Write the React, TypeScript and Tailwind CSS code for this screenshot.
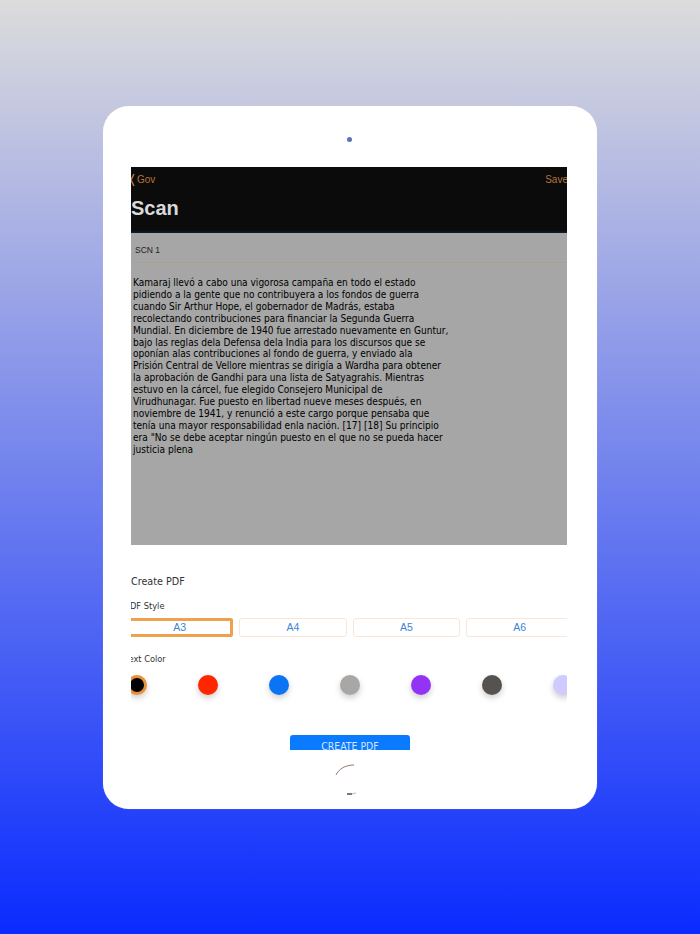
import React from "react";

const body = [
  "Kamaraj llevó a cabo una vigorosa campaña en todo el estado",
  "pidiendo a la gente que no contribuyera a los fondos de guerra",
  "cuando Sir Arthur Hope, el gobernador de Madrás, estaba",
  "recolectando contribuciones para financiar la Segunda Guerra",
  "Mundial. En diciembre de 1940 fue arrestado nuevamente en Guntur,",
  "bajo las reglas dela Defensa dela India para los discursos que se",
  "oponían alas contribuciones al fondo de guerra, y enviado ala",
  "Prisión Central de Vellore mientras se dirigía a Wardha para obtener",
  "la aprobación de Gandhi para una lista de Satyagrahis. Mientras",
  "estuvo en la cárcel, fue elegido Consejero Municipal de",
  "Virudhunagar. Fue puesto en libertad nueve meses después, en",
  "noviembre de 1941, y renunció a este cargo porque pensaba que",
  "tenía una mayor responsabilidad enla nación. [17] [18] Su principio",
  "era \"No se debe aceptar ningún puesto en el que no se pueda hacer",
  "justicia plena",
];

const colors = ["bg-[#ff2600]", "bg-[#0a74f5]", "bg-[#a9a7a6]", "bg-[#9233f5]", "bg-[#55524f]", "bg-[#cfcbff]"];
const sizes = ["A4", "A5", "A6"];
const ui = "font-['Liberation_Sans',sans-serif]";
const doc = "font-['DejaVu_Sans_Condensed','DejaVu_Sans',sans-serif]";

export default function App() {
  return (
    <div className="flex h-[934px] w-[700px] flex-col overflow-hidden bg-linear-to-b/srgb from-[#dcdcdc] to-[#0a2bff] pt-[106px] pl-[103px]">
      <div className="flex h-[703px] w-[494px] flex-col items-start rounded-[26px] bg-white shadow-[0_0_1px_0_rgba(255,225,195,0.6)]">
        <div className="mt-[31px] ml-[244px] h-[5px] w-[5px] rounded-full bg-[#5a72b8]" />
        <div className="mt-[25px] ml-[28px] flex h-[583px] w-[436px] flex-col overflow-hidden">
          <div className="flex h-[66px] shrink-0 flex-col bg-[#0b0b0b] shadow-[inset_0_-3px_3px_-2px_#12263a]">
            <div className={`flex items-center justify-between pt-[6px] text-[10px] leading-[14px] text-[#b5743a] ${ui}`}>
              <div className="flex items-center">
                <svg width="5" height="14" viewBox="0 0 5 14" className="shrink-0"><path d="M3 1 L0 7 L3 13" fill="none" stroke="#b5743a" strokeWidth="1.6" /></svg>
                <span className="ml-[1px]">Gov</span>
              </div>
              <span className="-mr-[1px]">Save</span>
            </div>
            <div className={`mt-[9px] text-[20px] leading-[24px] font-bold text-[#d9d9d9] ${ui}`}>Scan</div>
          </div>
          <div className="flex h-[312px] shrink-0 flex-col bg-[#a6a6a6]">
            <div className={`ml-[4px] flex h-[30px] items-center border-b border-[#ab9f90] pt-[6px] text-[8.5px] text-[#222] ${ui}`}>
              SCN 1
            </div>
            <div className={`mt-[14px] pl-[2px] text-[10.05px] leading-[11.9px] whitespace-nowrap text-[#000] ${doc}`}>
              {body.map((l) => <div key={l}>{l}</div>)}
            </div>
          </div>
          <div className={`mt-[30px] text-[10.7px] leading-[14px] text-[#333] ${doc}`}>Create PDF</div>
          <div className={`mt-[11px] -ml-[6px] text-[9.2px] leading-[12px] text-[#333] ${doc}`}>PDF Style</div>
          <div className={`mt-[6px] flex gap-[6px] text-[10.5px] text-[#3f82d6] ${ui}`}>
            <div className="-ml-[5px] flex h-[19px] w-[107.33px] shrink-0 items-center justify-center rounded-[2px] border-[3px] border-[#f0a14d]">A3</div>
            {sizes.map((s) => (
              <div key={s} className="flex h-[19px] w-[107.33px] shrink-0 items-center justify-center rounded-[3px] border border-[#fbe6d6]">{s}</div>
            ))}
          </div>
          <div className={`mt-[16px] -ml-[6px] text-[9.2px] leading-[12px] text-[#333] ${doc}`}>Text Color</div>
          <div className="mt-[10px] flex gap-[51px]">
            <div className="-ml-[4px] h-[20px] w-[20px] shrink-0 rounded-full border-[3px] border-[#e8913a] bg-black shadow-[0_3px_6px_rgba(0,0,0,0.2)]" />
            {colors.map((c) => (
              <div key={c} className={`h-[20px] w-[20px] shrink-0 rounded-full ${c} shadow-[0_3px_6px_rgba(0,0,0,0.2)]`} />
            ))}
          </div>
          <div className={`mt-[40px] ml-[159px] flex h-[15px] w-[120px] shrink-0 items-start justify-center overflow-hidden rounded-t-[3px] bg-[#0a7aff] pt-[5px] text-[10.4px] leading-[13px] text-[#d5e6ff] ${doc}`}>
            CREATE PDF
          </div>
        </div>
        <svg width="26" height="34" viewBox="0 0 26 34" className="mt-[12px] ml-[232px]">
          <path d="M1 13 C4 7 10 3 19 3" fill="none" stroke="#8a6a58" strokeWidth="0.9" />
          <path d="M12 32 H17" stroke="#222" strokeWidth="1.2" />
          <path d="M17 32 L21 31" stroke="#c9a98c" strokeWidth="0.9" />
        </svg>
      </div>
    </div>
  );
}
